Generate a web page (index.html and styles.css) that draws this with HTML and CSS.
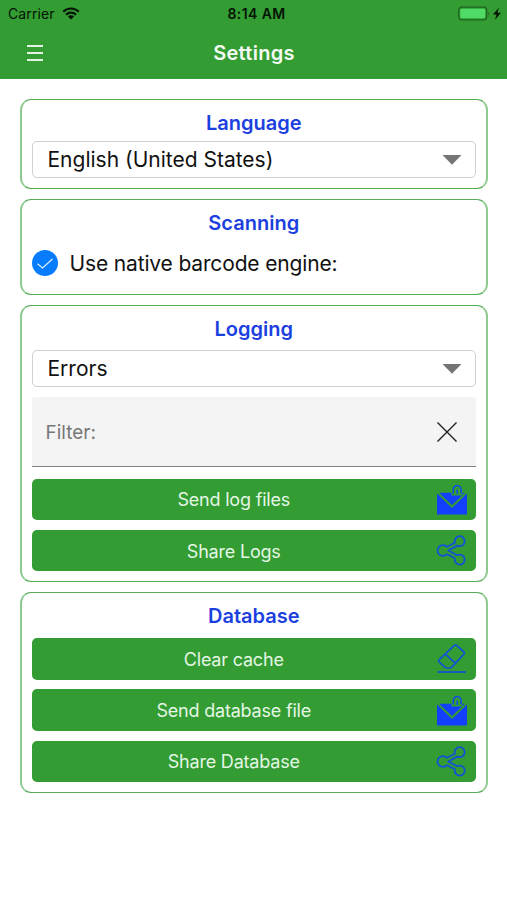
FILE: index.html
```html
<!DOCTYPE html>
<html lang="en">
<head>
  <meta charset="utf-8">
  <title>Settings</title>
  <link rel="stylesheet" href="styles.css">
</head>
<body>
  <!-- icons used more than once -->
  <svg class="defs">
    <symbol id="mail" viewBox="0 0 32 32">
      <path d="M1 9.500 V30.500 H31 V9.500 L16 24 Z" fill="#1340ff"/>
      <path d="M3 8.800 H15.500 V11.500 H26.500 V8.800 H29 L16 21 Z" fill="#1340ff"/>
      <path d="M17.300 9.500 V5.500 a3.900 3.900 0 0 1 7.800 0 V9.500 M21.200 10 V5.500" fill="none" stroke="#1340ff" stroke-width="1.400"/>
    </symbol>
    <symbol id="share" viewBox="0 0 32 32">
      <path d="M11 11.800 L18.900 7.800 A5 5 0 1 1 21.300 10.600 L12.300 15.500 L21.300 20.200 A5 5 0 1 1 18.900 23.200 L11 19.200 A5.450 5.450 0 1 1 11 11.800 Z" fill="none" stroke="#1450d8" stroke-width="1.800" stroke-linejoin="round"/>
    </symbol>
  </svg>

  <div class="header">
    <div class="status">
      <div class="carrier">
        <span>Carrier</span>
        <svg width="18" height="13" viewBox="0 0 18 13">
          <path d="M1.200 4.800 a11 11 0 0 1 15.600 0 M4 7.700 a7 7 0 0 1 10 0" fill="none" stroke="#041404" stroke-width="2.100"/>
          <path d="M9 12.600 L5.900 9.500 a4.400 4.400 0 0 1 6.200 0 Z" fill="#041404"/>
        </svg>
      </div>
      <div class="time">8:14 AM</div>
      <div class="battery">
        <svg width="45" height="16" viewBox="0 0 45 16">
          <rect x="0.700" y="1.200" width="28" height="12.600" rx="3" fill="none" stroke="#1f661f" stroke-width="1.300"/>
          <rect x="2.300" y="2.800" width="24.800" height="9.400" rx="1.500" fill="#4fdb66"/>
          <path d="M30 5.500 q1.600 2 0 4 Z" fill="#1f661f"/>
          <path d="M40.800 1.700 L35 8.500 H38.500 L37 13.800 L43 6.700 H39.400 Z" fill="#041404"/>
        </svg>
      </div>
    </div>
    <div class="navbar">
      <div class="menu">
        <div class="menu-line"></div>
        <div class="menu-line"></div>
        <div class="menu-line"></div>
      </div>
      <div class="title">Settings</div>
    </div>
  </div>

  <div class="content">
    <div class="card language">
      <div class="card-title">Language</div>
      <div class="select">
        <span>English (United States)</span>
        <svg width="20" height="10" viewBox="0 0 20 10"><path d="M0.500 0 H19.500 L10 9.800 Z" fill="#757575"/></svg>
      </div>
    </div>

    <div class="card scanning">
      <div class="card-title">Scanning</div>
      <div class="check-row">
        <div class="check">
          <svg width="26" height="26" viewBox="0 0 26 26"><path d="M5.500 13.800 L10.500 18 L20.500 9" fill="none" stroke="#d8ecff" stroke-width="1.300"/></svg>
        </div>
        <span>Use native barcode engine:</span>
      </div>
    </div>

    <div class="card logging">
      <div class="card-title">Logging</div>
      <div class="select">
        <span>Errors</span>
        <svg width="20" height="10" viewBox="0 0 20 10"><path d="M0.500 0 H19.500 L10 9.800 Z" fill="#757575"/></svg>
      </div>
      <div class="filter">
        <span>Filter:</span>
        <svg width="22" height="22" viewBox="0 0 22 22"><path d="M1.500 1.500 L20.500 20.500 M20.500 1.500 L1.500 20.500" stroke="#222" stroke-width="1.400"/></svg>
      </div>
      <div class="btn">
        <span>Send log files</span>
        <svg class="icon"><use href="#mail"/></svg>
      </div>
      <div class="btn">
        <span>Share Logs</span>
        <svg class="icon"><use href="#share"/></svg>
      </div>
    </div>

    <div class="card database">
      <div class="card-title">Database</div>
      <div class="btn">
        <span>Clear cache</span>
        <svg class="icon" viewBox="0 0 32 32">
          <g fill="none" stroke="#1450d8" stroke-width="1.700" stroke-linejoin="round">
            <path d="M18.300 2.300 Q19.300 1.300 20.300 2.200 L28 9 Q29 10 28 11 L16 23.800 Q14.800 25 13 25 H11 Q9.800 25 9 24.200 L3.200 19.200 Q2 18 3 16.900 Z M9.600 11.300 L19.200 20.200"/>
            <path d="M1.500 29 H30"/>
          </g>
        </svg>
      </div>
      <div class="btn">
        <span>Send database file</span>
        <svg class="icon"><use href="#mail"/></svg>
      </div>
      <div class="btn">
        <span>Share Database</span>
        <svg class="icon"><use href="#share"/></svg>
      </div>
    </div>
  </div>
</body>
</html>
```
FILE: styles.css
```css
* {
  box-sizing: border-box;
}

body {
  margin: 0;
  background: #fff;
  font-family: Inter, "Liberation Sans", sans-serif;
  color: #111;
}

.defs {
  display: none;
}

svg {
  display: block;
  flex: none;
}

.header {
  height: 79px;
  background: #339c33;
}

.status {
  display: grid;
  grid-template-columns: 1fr auto 1fr;
  align-items: center;
  height: 27px;
  padding: 0 4px 0 8px;
  color: #041404;
}

.carrier {
  display: flex;
  align-items: center;
  gap: 7px;
  font-size: 14px;
  letter-spacing: 0.1px;
}

.time {
  padding-left: 2px;
  font-size: 14px;
  font-weight: 600;
  letter-spacing: 0.4px;
}

.battery {
  justify-self: end;
}

.navbar {
  display: grid;
  grid-template-columns: 80px 1fr 80px;
  align-items: center;
  height: 51px;
}

.menu {
  display: flex;
  flex-direction: column;
  gap: 5px;
  width: 16px;
  margin-left: 27px;
}

.menu-line {
  height: 2px;
  background: #e3f3e3;
}

.title {
  padding-left: 1px;
  font-size: 20px;
  font-weight: 600;
  letter-spacing: 0.3px;
  text-align: center;
  color: #f4fbf4;
}

.content {
  display: flex;
  flex-direction: column;
  gap: 10px;
  padding: 20px 19px 0 20px;
}

.card {
  display: flex;
  flex-direction: column;
  gap: 10px;
  padding: 10px 10px 0 9.5px;
  border: 1px solid #55ad55;
  border-left: 2px solid #8fca8f;
  border-right: 2px solid #8fca8f;
  border-radius: 11px;
}

.language {
  height: 90px;
}

.scanning {
  height: 96px;
}

.logging {
  height: 277px;
}

.database {
  height: 201px;
}

.card-title {
  height: 26px;
  line-height: 26px;
  margin-bottom: -5px;
  font-size: 20px;
  font-weight: 600;
  text-align: center;
  color: #1c3fe0;
}

.scanning .card-title,
.logging .card-title {
  margin-bottom: -2px;
}

.database .card-title {
  margin-bottom: -1px;
}

.select {
  display: flex;
  align-items: center;
  justify-content: space-between;
  height: 37px;
  padding: 0 13px 0 15px;
  border: 1px solid #d0d0d0;
  border-radius: 5px;
  font-size: 21px;
}

.check-row {
  display: flex;
  align-items: center;
  gap: 12px;
  height: 38px;
  font-size: 21px;
  letter-spacing: -0.15px;
}

.check {
  width: 26px;
  height: 26px;
  border-radius: 50%;
  background: #087cff;
}

.filter {
  display: flex;
  align-items: center;
  justify-content: space-between;
  height: 70px;
  margin-bottom: 1.5px;
  padding: 1px 18px 0 14px;
  background: #f4f4f4;
  border-bottom: 1px solid #808080;
  border-radius: 3px 3px 0 0;
  font-size: 19px;
  color: #777;
}

.btn {
  display: flex;
  align-items: center;
  height: 41.5px;
  margin-bottom: -0.25px;
  padding: 1px 8px 0 0;
  border-radius: 5px;
  background: #339c33;
  font-size: 18px;
  letter-spacing: -0.2px;
  color: #e4f6e4;
}

.btn span {
  flex: 1;
  text-align: center;
}

.icon {
  width: 32px;
  height: 32px;
}
```
